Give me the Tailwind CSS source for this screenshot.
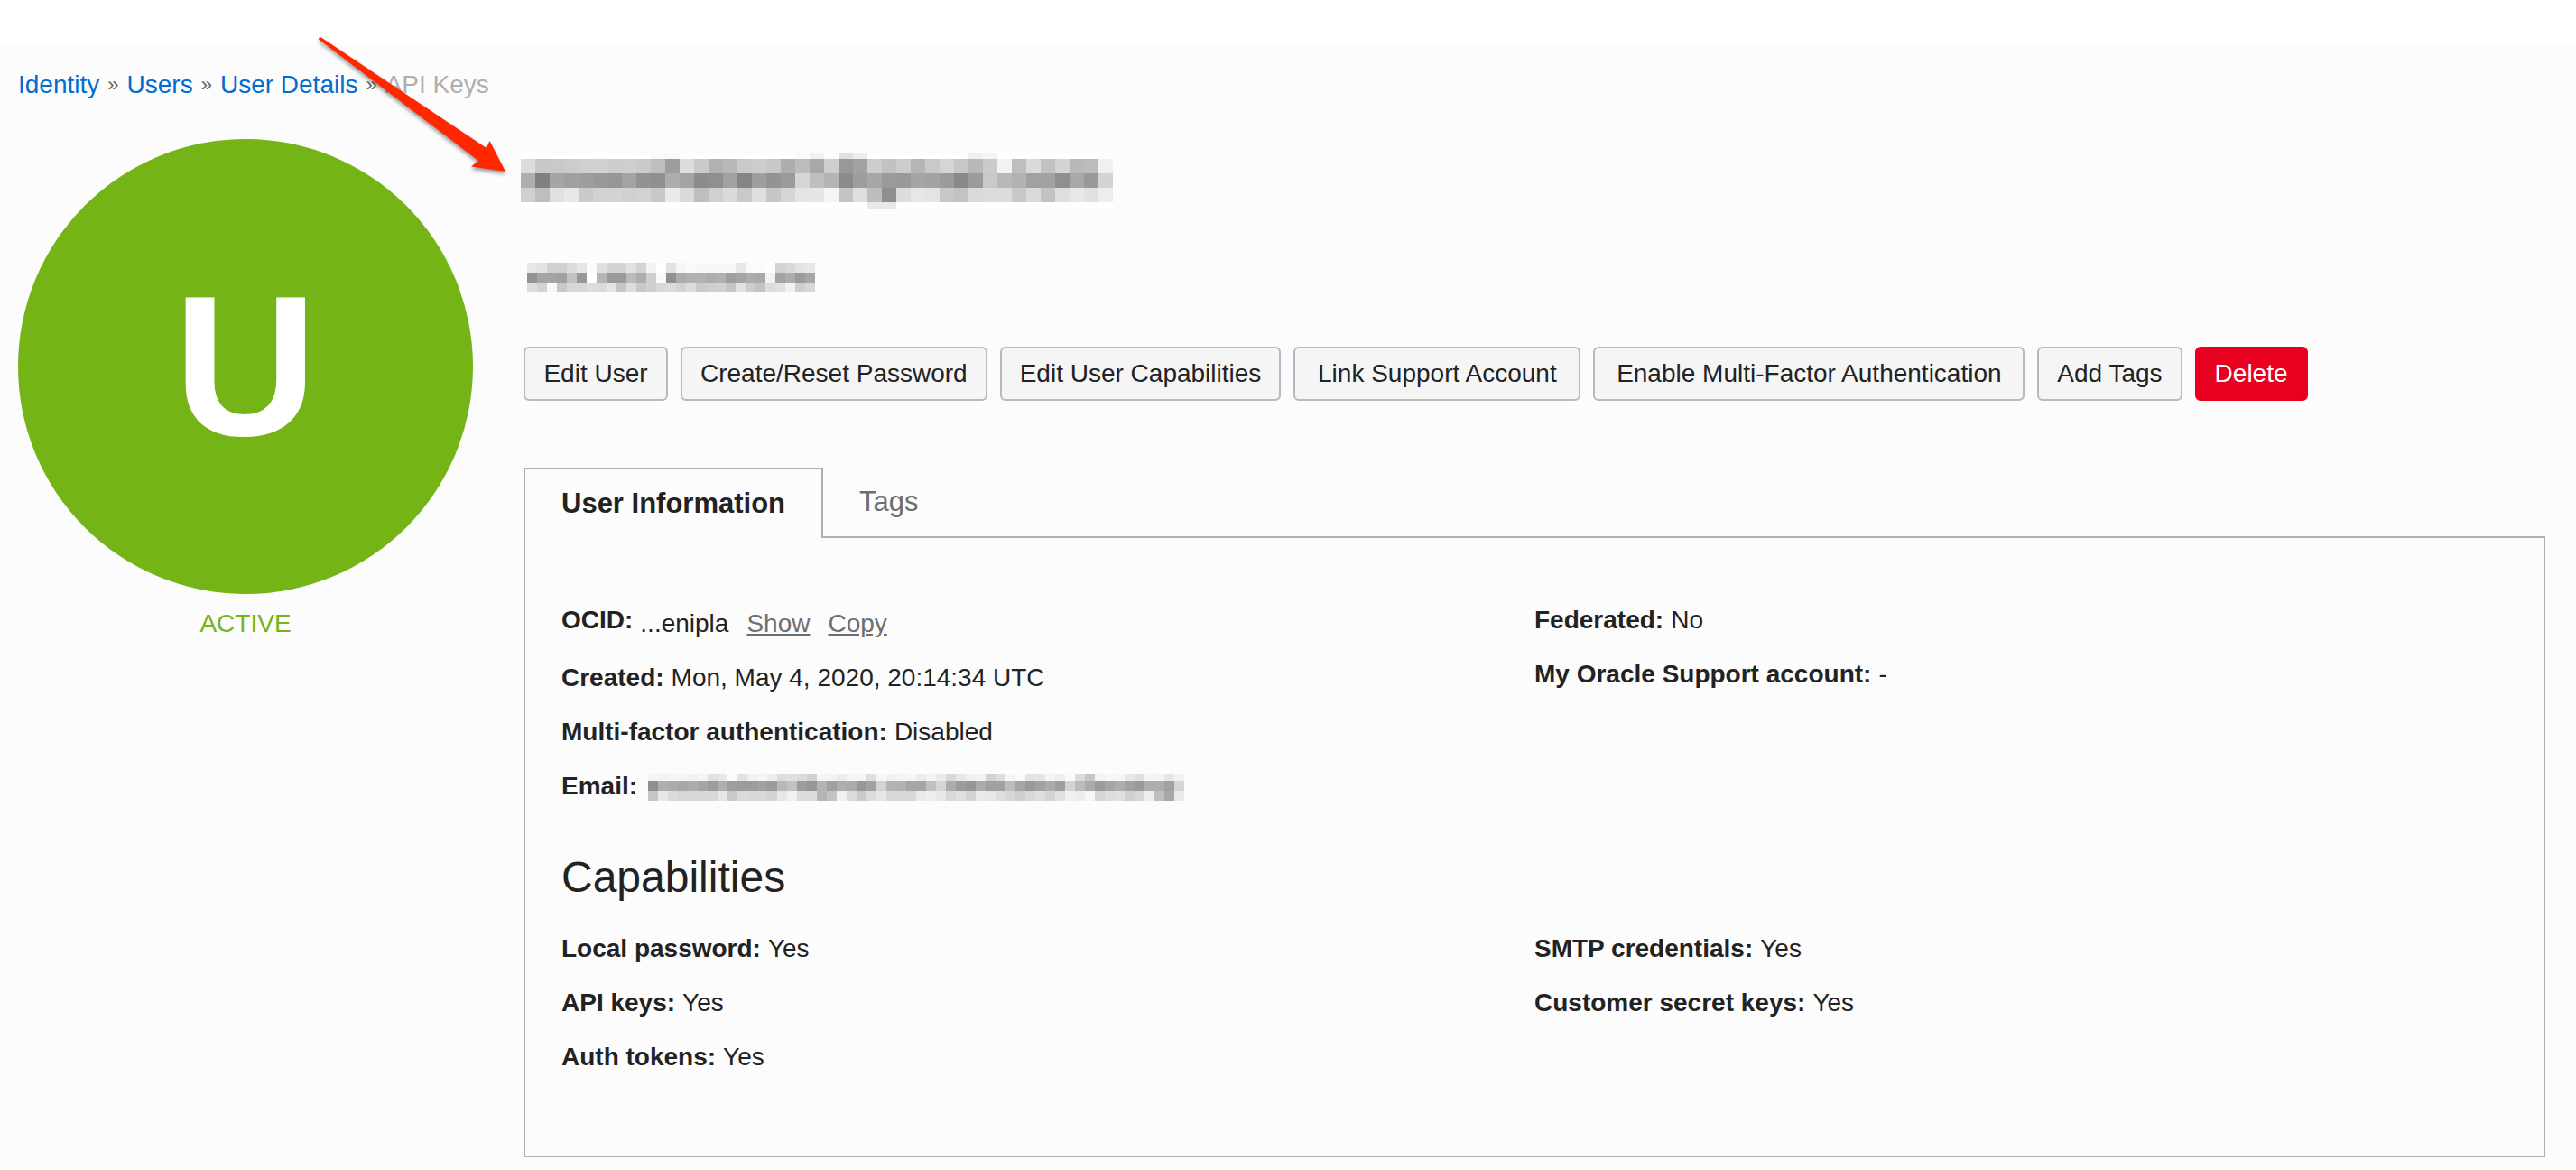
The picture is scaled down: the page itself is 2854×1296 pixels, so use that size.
<!DOCTYPE html>
<html lang="en">
<head>
<meta charset="utf-8">
<title>User Details</title>
<script src="https://cdn.jsdelivr.net/npm/@tailwindcss/browser@4"></script>
</head>
<body class="relative min-h-screen bg-[#fcfcfc] font-['Liberation_Sans',Arial,sans-serif] text-[28px] leading-[34px] text-[#222]">
<div class="h-12 bg-white"></div>
<div class="pr-[34px] pl-5">
  <nav aria-label="Breadcrumb" class="pt-[29px]">
    <ol class="flex gap-[9px] text-[#666]">
      <li class="flex gap-[9px]"><a href="#" class="text-[#006dd1]">Identity</a><span class="text-[22px]">»</span></li>
      <li class="flex gap-[9px]"><a href="#" class="text-[#006dd1]">Users</a><span class="text-[22px]">»</span></li>
      <li class="flex gap-[9px]"><a href="#" class="text-[#006dd1]">User Details</a><span class="text-[22px]">»</span></li>
      <li class="text-[#afafaf]" aria-current="page">API Keys</li>
    </ol>
  </nav>
  <main class="mt-[43px] flex gap-14">
    <aside class="w-[504px] shrink-0 text-center">
      <div class="flex aspect-square items-center justify-center rounded-full bg-[#74b417] text-[220px] leading-none font-bold text-white">U</div>
      <p class="mt-4 text-[#74b417]">ACTIVE</p>
    </aside>
    <div class="min-w-0 grow">
      <h1 class="-ml-[3px] pt-[15px]"><svg id="title-mosaic" width="672" height="62" role="img" aria-label="User name, redacted" shape-rendering="crispEdges"></svg></h1>
      <p class="mt-[60px] ml-1"><svg id="description-mosaic" width="330" height="33" role="img" aria-label="Description, redacted" shape-rendering="crispEdges"></svg></p>
      <div class="mt-[60px] flex flex-wrap gap-3.5">
        <button type="button" class="h-[60px] min-w-40 rounded-md border-2 border-[#b3bac2] bg-[#f5f5f5] px-5">Edit User</button>
        <button type="button" class="h-[60px] rounded-md border-2 border-[#b3bac2] bg-[#f5f5f5] px-5">Create/Reset Password</button>
        <button type="button" class="h-[60px] rounded-md border-2 border-[#b3bac2] bg-[#f5f5f5] px-5">Edit User Capabilities</button>
        <button type="button" class="h-[60px] min-w-[318px] rounded-md border-2 border-[#b3bac2] bg-[#f5f5f5] px-5">Link Support Account</button>
        <button type="button" class="h-[60px] min-w-[478px] rounded-md border-2 border-[#b3bac2] bg-[#f5f5f5] px-5">Enable Multi-Factor Authentication</button>
        <button type="button" class="h-[60px] rounded-md border-2 border-[#b3bac2] bg-[#f5f5f5] px-5">Add Tags</button>
        <button type="button" class="h-[60px] rounded-md border-2 border-[#e7001f] bg-[#e7001f] px-5 text-white">Delete</button>
      </div>
      <div role="tablist" class="mt-[74px] flex items-end">
        <button type="button" role="tab" aria-selected="true" class="z-10 -mb-0.5 h-[78px] border-2 border-b-0 border-[#aeaeae] bg-[#fcfcfc] px-10 text-[31px] font-bold">User Information</button>
        <button type="button" role="tab" aria-selected="false" class="h-[76px] px-10 text-[31px] text-[#6e6e6e]">Tags</button>
      </div>
      <section role="tabpanel" class="border-2 border-[#aeaeae] px-10 pt-[74px] pb-[92px]">
        <div class="grid grid-cols-2">
          <dl class="flex flex-col gap-[26px]">
            <div class="flex gap-2 pb-1"><dt class="font-bold">OCID:</dt><dd class="-mb-1 flex gap-5 pt-1">...enipla <a href="#" class="text-[#6e6e6e] underline">Show</a><a href="#" class="text-[#6e6e6e] underline">Copy</a></dd></div>
            <div class="flex gap-2"><dt class="font-bold">Created:</dt><dd>Mon, May 4, 2020, 20:14:34 UTC</dd></div>
            <div class="flex gap-2"><dt class="font-bold">Multi-factor authentication:</dt><dd>Disabled</dd></div>
            <div class="flex gap-2"><dt class="font-bold">Email:</dt><dd><svg id="email-mosaic" width="610" height="34" role="img" aria-label="Email address, redacted" shape-rendering="crispEdges"></svg></dd></div>
          </dl>
          <dl class="flex flex-col gap-[26px]">
            <div class="flex gap-2"><dt class="font-bold">Federated:</dt><dd>No</dd></div>
            <div class="flex gap-2"><dt class="font-bold">My Oracle Support account:</dt><dd>-</dd></div>
          </dl>
        </div>
        <h2 class="mt-14 text-5xl leading-[56px]">Capabilities</h2>
        <div class="mt-[34px] grid grid-cols-2">
          <dl class="flex flex-col gap-[26px]">
            <div class="flex gap-2"><dt class="font-bold">Local password:</dt><dd>Yes</dd></div>
            <div class="flex gap-2"><dt class="font-bold">API keys:</dt><dd>Yes</dd></div>
            <div class="flex gap-2"><dt class="font-bold">Auth tokens:</dt><dd>Yes</dd></div>
          </dl>
          <dl class="flex flex-col gap-[26px]">
            <div class="flex gap-2"><dt class="font-bold">SMTP credentials:</dt><dd>Yes</dd></div>
            <div class="flex gap-2"><dt class="font-bold">Customer secret keys:</dt><dd>Yes</dd></div>
          </dl>
        </div>
      </section>
    </div>
  </main>
</div>

<!-- Callout arrow pointing at the user name -->
<svg class="pointer-events-none absolute top-8 left-[344px] drop-shadow-[0_3px_2px_rgb(0_0_0/0.4)]" width="224" height="168" viewBox="344 32 224 168" aria-hidden="true">
  <path fill="#ff2600" d="M353 43.5Q353 40.5 356 41.5L539 164L542.5 156L560 190L522 184.5L530 178Z"/>
</svg>

<script>
  // Each row is [height, grey levels as hex pairs]; every pair paints one cell.
  const mosaics = {
    'title-mosaic': { x: 0, cell: 16, rows: [
      [7, 'fffffffffffffffffff9f9fffffffffffffffff9f0fde0edfffffffffffffff0f4fffffffffffffffd'],
      [16, 'dcc8c9ccd0d1cdcecabe9dddcab2b8cacdc8aebca8ce98a2cdc2ccb5c9d5c7b8cbf3bedac2d4b9bcf0'],
      [16, 'ae80a5a09e9996a39290ada48c8fa2859e939bd6beb48b9ea79a99a5a29b889bc9b8b2a1a28fa899d3'],
      [16, 'd0bee0e8cad2d3d0d2c8eadabed0dac9dfc6d5e4e6f5c4dfbd8fdde7e4c8c3dadcdcc8dac2dfe7e1ed'],
      [7, 'fffffffffffffffffffffffffffffffffffffffffffdffffe8e8ffffffffffffffffffffffffffffff'] ] },
    'description-mosaic': { x: 0, cell: 11, rows: [
      [11, 'e7e3d0d0dce6fbe0d4d4e1d3f3ffe1f5f9f8f8f8f8e7fafbfdd2d8e3e7'],
      [11, '92a5a4a0c298ffb69a9abbaecff990adb1b2aeb19fa5ada9f2a3ac9ba7'],
      [11, 'ddd2f8c9d7d8dddae5c6ddc8cfd8dcd3ddcacfd1c5e2ccc2dde0f1ced6'] ] },
    'email-mosaic': { x: 4, y: 3, cell: 11, rows: [
      [8, 'f5f3f5f5f2f5e2e8fbe2f1f5eddddfdbd1f5f3ecf5f5def7f2f4f5ecf4ead8e8f0f3d1ddf5fae3e5f5effadbc6f4f6f5e6e0f5f4e6f2'],
      [11, '90aeaba8ada59cb09f9b9ca19cb9c29d97b3a0adab98a1d3b3b2a6a6c1d5ac9c96aba0a1bda599a2ab9fd3bbab9ba4ada29aaeada2d5'],
      [11, 'c5e7dad7d8d8d8e7c9dad8d8d2e7f1ddddb5c3f1dbc9dce6d7d7d8eaede8d8dfd3e9e7ded7cfd8dfd3e1f0ecf6d5dee0d0d7edbfa8ea'] ] }
  };
  for (const [id, { x, y = 0, cell, rows }] of Object.entries(mosaics)) {
    const svg = document.getElementById(id);
    let top = y;
    for (const [height, levels] of rows) {
      levels.match(/../g).forEach((g, i) => {
        const rect = document.createElementNS('http://www.w3.org/2000/svg', 'rect');
        rect.setAttribute('x', x + i * cell);
        rect.setAttribute('y', top);
        rect.setAttribute('width', cell);
        rect.setAttribute('height', height);
        rect.setAttribute('fill', '#' + g + g + g);
        svg.append(rect);
      });
      top += height;
    }
  }
</script>
</body>
</html>
